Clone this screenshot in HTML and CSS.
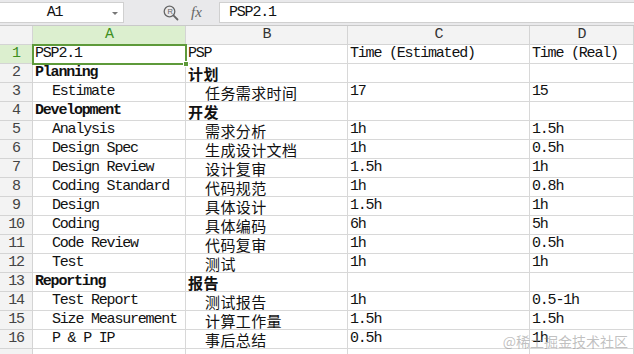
FILE: index.html
```html
<!DOCTYPE html>
<html lang="zh">
<head>
<meta charset="utf-8">
<link rel="stylesheet" href="styles.css">
</head>
<body>
<div class="app">
  <div class="toolbar">
    <div class="namebox"><span class="ref">A1</span><span class="caret"></span></div>
    <div class="tools">
      <svg class="zoom-ico" width="16" height="16" viewBox="0 0 16 16"><circle cx="6.5" cy="6.5" r="5.3" fill="none" stroke="#666" stroke-width="1.3"/><line x1="10.4" y1="10.4" x2="14.5" y2="14.5" stroke="#666" stroke-width="1.8" stroke-linecap="round"/><text x="6.5" y="9.3" font-size="7.5" text-anchor="middle" font-family="Liberation Sans, sans-serif" fill="#666">R</text></svg>
      <span class="fx">fx</span>
    </div>
    <div class="formula">PSP2.1</div>
  </div>
  <div class="sheet">
    <div class="corner"></div>
    <div class="colh active">A</div>
    <div class="colh">B</div>
    <div class="colh">C</div>
    <div class="colh">D</div>

    <div class="rowh active">1</div>
    <div class="c sel">PSP2.1<span class="handle"></span></div>
    <div class="c">PSP</div>
    <div class="c">Time (Estimated)</div>
    <div class="c">Time (Real)</div>

    <div class="rowh">2</div>
    <div class="c b">Planning</div>
    <div class="c zh b">计划</div>
    <div class="c"></div>
    <div class="c"></div>

    <div class="rowh">3</div>
    <div class="c in">Estimate</div>
    <div class="c zh in">任务需求时间</div>
    <div class="c">17</div>
    <div class="c">15</div>

    <div class="rowh">4</div>
    <div class="c b">Development</div>
    <div class="c zh b">开发</div>
    <div class="c"></div>
    <div class="c"></div>

    <div class="rowh">5</div>
    <div class="c in">Analysis</div>
    <div class="c zh in">需求分析</div>
    <div class="c">1h</div>
    <div class="c">1.5h</div>

    <div class="rowh">6</div>
    <div class="c in">Design Spec</div>
    <div class="c zh in">生成设计文档</div>
    <div class="c">1h</div>
    <div class="c">0.5h</div>

    <div class="rowh">7</div>
    <div class="c in">Design Review</div>
    <div class="c zh in">设计复审</div>
    <div class="c">1.5h</div>
    <div class="c">1h</div>

    <div class="rowh">8</div>
    <div class="c in">Coding Standard</div>
    <div class="c zh in">代码规范</div>
    <div class="c">1h</div>
    <div class="c">0.8h</div>

    <div class="rowh">9</div>
    <div class="c in">Design</div>
    <div class="c zh in">具体设计</div>
    <div class="c">1.5h</div>
    <div class="c">1h</div>

    <div class="rowh">10</div>
    <div class="c in">Coding</div>
    <div class="c zh in">具体编码</div>
    <div class="c">6h</div>
    <div class="c">5h</div>

    <div class="rowh">11</div>
    <div class="c in">Code Review</div>
    <div class="c zh in">代码复审</div>
    <div class="c">1h</div>
    <div class="c">0.5h</div>

    <div class="rowh">12</div>
    <div class="c in">Test</div>
    <div class="c zh in">测试</div>
    <div class="c">1h</div>
    <div class="c">1h</div>

    <div class="rowh">13</div>
    <div class="c b">Reporting</div>
    <div class="c zh b">报告</div>
    <div class="c"></div>
    <div class="c"></div>

    <div class="rowh">14</div>
    <div class="c in">Test Report</div>
    <div class="c zh in">测试报告</div>
    <div class="c">1h</div>
    <div class="c">0.5-1h</div>

    <div class="rowh">15</div>
    <div class="c in">Size Measurement</div>
    <div class="c zh in">计算工作量</div>
    <div class="c">1.5h</div>
    <div class="c">1.5h</div>

    <div class="rowh">16</div>
    <div class="c in">P &amp; P IP</div>
    <div class="c zh in">事后总结</div>
    <div class="c">0.5h</div>
    <div class="c">1h</div>

    <div class="rowh"></div>
    <div class="c"></div>
    <div class="c"></div>
    <div class="c"></div>
    <div class="c"></div>
  </div>
  <div class="watermark">@稀土掘金技术社区</div>
</div>
</body>
</html>
```
FILE: styles.css
```css
* { box-sizing: border-box; }
html, body { margin: 0; padding: 0; background: #fff; }
body { width: 634px; height: 354px; overflow: hidden; }
.app {
  position: relative;
  width: 634px;
  height: 354px;
  overflow: hidden;
  font-family: "Liberation Mono", "Noto Sans CJK SC", monospace;
  font-size: 15px;
  letter-spacing: -1.2px;
  color: #111;
}
.toolbar {
  display: flex;
  align-items: center;
  height: 26px;
  background: #e9e9eb;
  border-bottom: 1px solid #c9c9c9;
  padding: 2px 0 2px 0;
}
.namebox {
  position: relative;
  width: 124px;
  height: 21px;
  background: #fff;
  border: 1px solid #d0d0d0;
  border-left: none;
  display: flex;
  align-items: center;
  justify-content: center;
  padding-right: 14px;
  font-size: 15px;
}
.caret {
  position: absolute;
  right: 5px;
  top: 9px;
  width: 0;
  height: 0;
  border-left: 3px solid transparent;
  border-right: 3px solid transparent;
  border-top: 3px solid #777;
}
.tools {
  width: 95px;
  display: flex;
  align-items: center;
  padding-left: 39px;
  gap: 12px;
}
.fx {
  font-family: "Liberation Serif", serif;
  font-style: italic;
  font-size: 15px;
  color: #666;
  letter-spacing: 0;
}
.formula {
  flex: 1;
  height: 21px;
  background: #fff;
  border: 1px solid #d0d0d0;
  border-right: none;
  padding-left: 9px;
  line-height: 19px;
  font-size: 15px;
}
.sheet {
  display: grid;
  grid-template-columns: 33px 153px 162px 182px 104px;
  grid-auto-rows: 19px;
}
.corner, .colh, .rowh {
  background: #f3f3f3;
  border-right: 1px solid #d4d4d4;
  border-bottom: 1px solid #d4d4d4;
  color: #333;
  line-height: 18px;
  text-align: center;
}
.colh.active, .rowh.active {
  background: #dcefcf;
  color: #3f8f1f;
}
.colh.active { border-bottom: 1px solid #c8d8bc; }
.rowh { color: #444; }
.c {
  position: relative;
  border-right: 1px solid #d8d8d8;
  border-bottom: 1px solid #d8d8d8;
  line-height: 18px;
  white-space: pre;
  padding-left: 2px;
}
.c.in { padding-left: 19px; }
.c.b { font-weight: bold; }
.c.zh {
  font-family: "Noto Sans CJK SC", sans-serif;
  font-size: 15px;
  letter-spacing: 0.4px;
  line-height: 19px;
}
.c.zh.b { font-weight: bold; }
.sel {
  outline: 2px solid #5e9a3a;
  outline-offset: -1px;
  z-index: 1;
}
.handle {
  position: absolute;
  right: -4px;
  bottom: -4px;
  width: 6px;
  height: 6px;
  background: #5e9a3a;
  border: 1px solid #fff;
}
.watermark {
  position: absolute;
  right: 6px;
  bottom: 3px;
  font-family: "Noto Sans CJK SC", sans-serif;
  font-size: 14px;
  letter-spacing: 0;
  color: rgba(140, 140, 140, 0.55);
}
```
